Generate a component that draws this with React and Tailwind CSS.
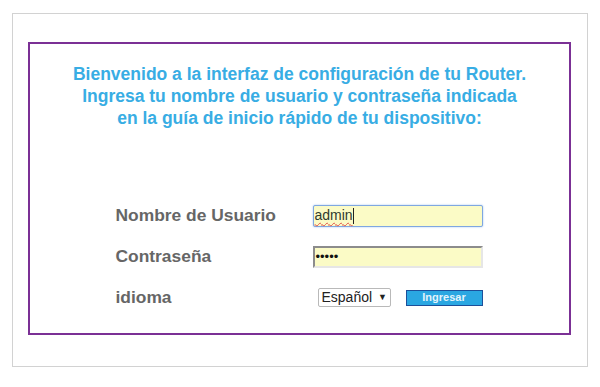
import React from "react";

const Login = () => {
  return (
    <div className="w-[600px] h-[387px] bg-white pt-[13px] px-3 font-['Liberation_Sans',Arial,sans-serif]">
      <div className="h-[354px] border border-[#d2d2d2] pt-[28px] pl-[15px] pr-[16px]">
        <div className="h-[293px] border-2 border-[#7b3095] pt-[19px] flex flex-col items-center">
          {/* welcome text */}
          <div className="text-center text-[17.5px] leading-[22px] font-bold text-[#38ade4]">
            <p>Bienvenido a la interfaz de configuración de tu Router.</p>
            <p>Ingresa tu nombre de usuario y contraseña indicada</p>
            <p>en la guía de inicio rápido de tu dispositivo:</p>
          </div>

          <div className="mt-[66px] w-[368px] flex flex-col text-[17.4px] font-bold text-[#666666]">
            <div className="h-[41px] flex items-center">
              <span className="w-[197px]">Nombre de Usuario</span>
              <div className="w-[170px] h-[22px] bg-[#fbfbc6] border border-[#7fa7e1] rounded-[2px] shadow-[0_0_2px_#9cc0f0] flex items-center pl-px">
                <span className="text-[14px] font-normal text-[#2f3b2f] underline decoration-wavy decoration-[#e0504a] decoration-1 underline-offset-2">
                  admin
                </span>
                <span className="w-px h-[16px] bg-[#222]" />
              </div>
            </div>

            <div className="h-[41px] flex items-center">
              <span className="w-[197px]">Contraseña</span>
              <div className="w-[170px] h-[22px] bg-[#fbfbc6] border-2 border-t-[#8c8c8c] border-l-[#8c8c8c] border-b-[#e6e6e6] border-r-[#e6e6e6] flex items-center pl-px">
                <span className="text-[13px] font-normal text-[#111]">•••••</span>
              </div>
            </div>

            <div className="h-[41px] flex items-center">
              <span className="w-[202px]">idioma</span>
              <div className="w-[73px] h-[19px] border border-[#b9b9b9] rounded-[2px] bg-white flex items-center pl-[3px] gap-[6px] text-[14px] font-normal text-[#222]">
                <span>Español</span>
                <span className="text-[9px]">▼</span>
              </div>
              <button className="ml-[15px] w-[77px] h-[16px] bg-[#2aa7e2] border border-[#1d4f9a] text-[11px] leading-none font-bold text-[#e3f4fc]">
                Ingresar
              </button>
            </div>
          </div>
        </div>
      </div>
    </div>
  );
};

export default function App() {
  return <Login />;
}
